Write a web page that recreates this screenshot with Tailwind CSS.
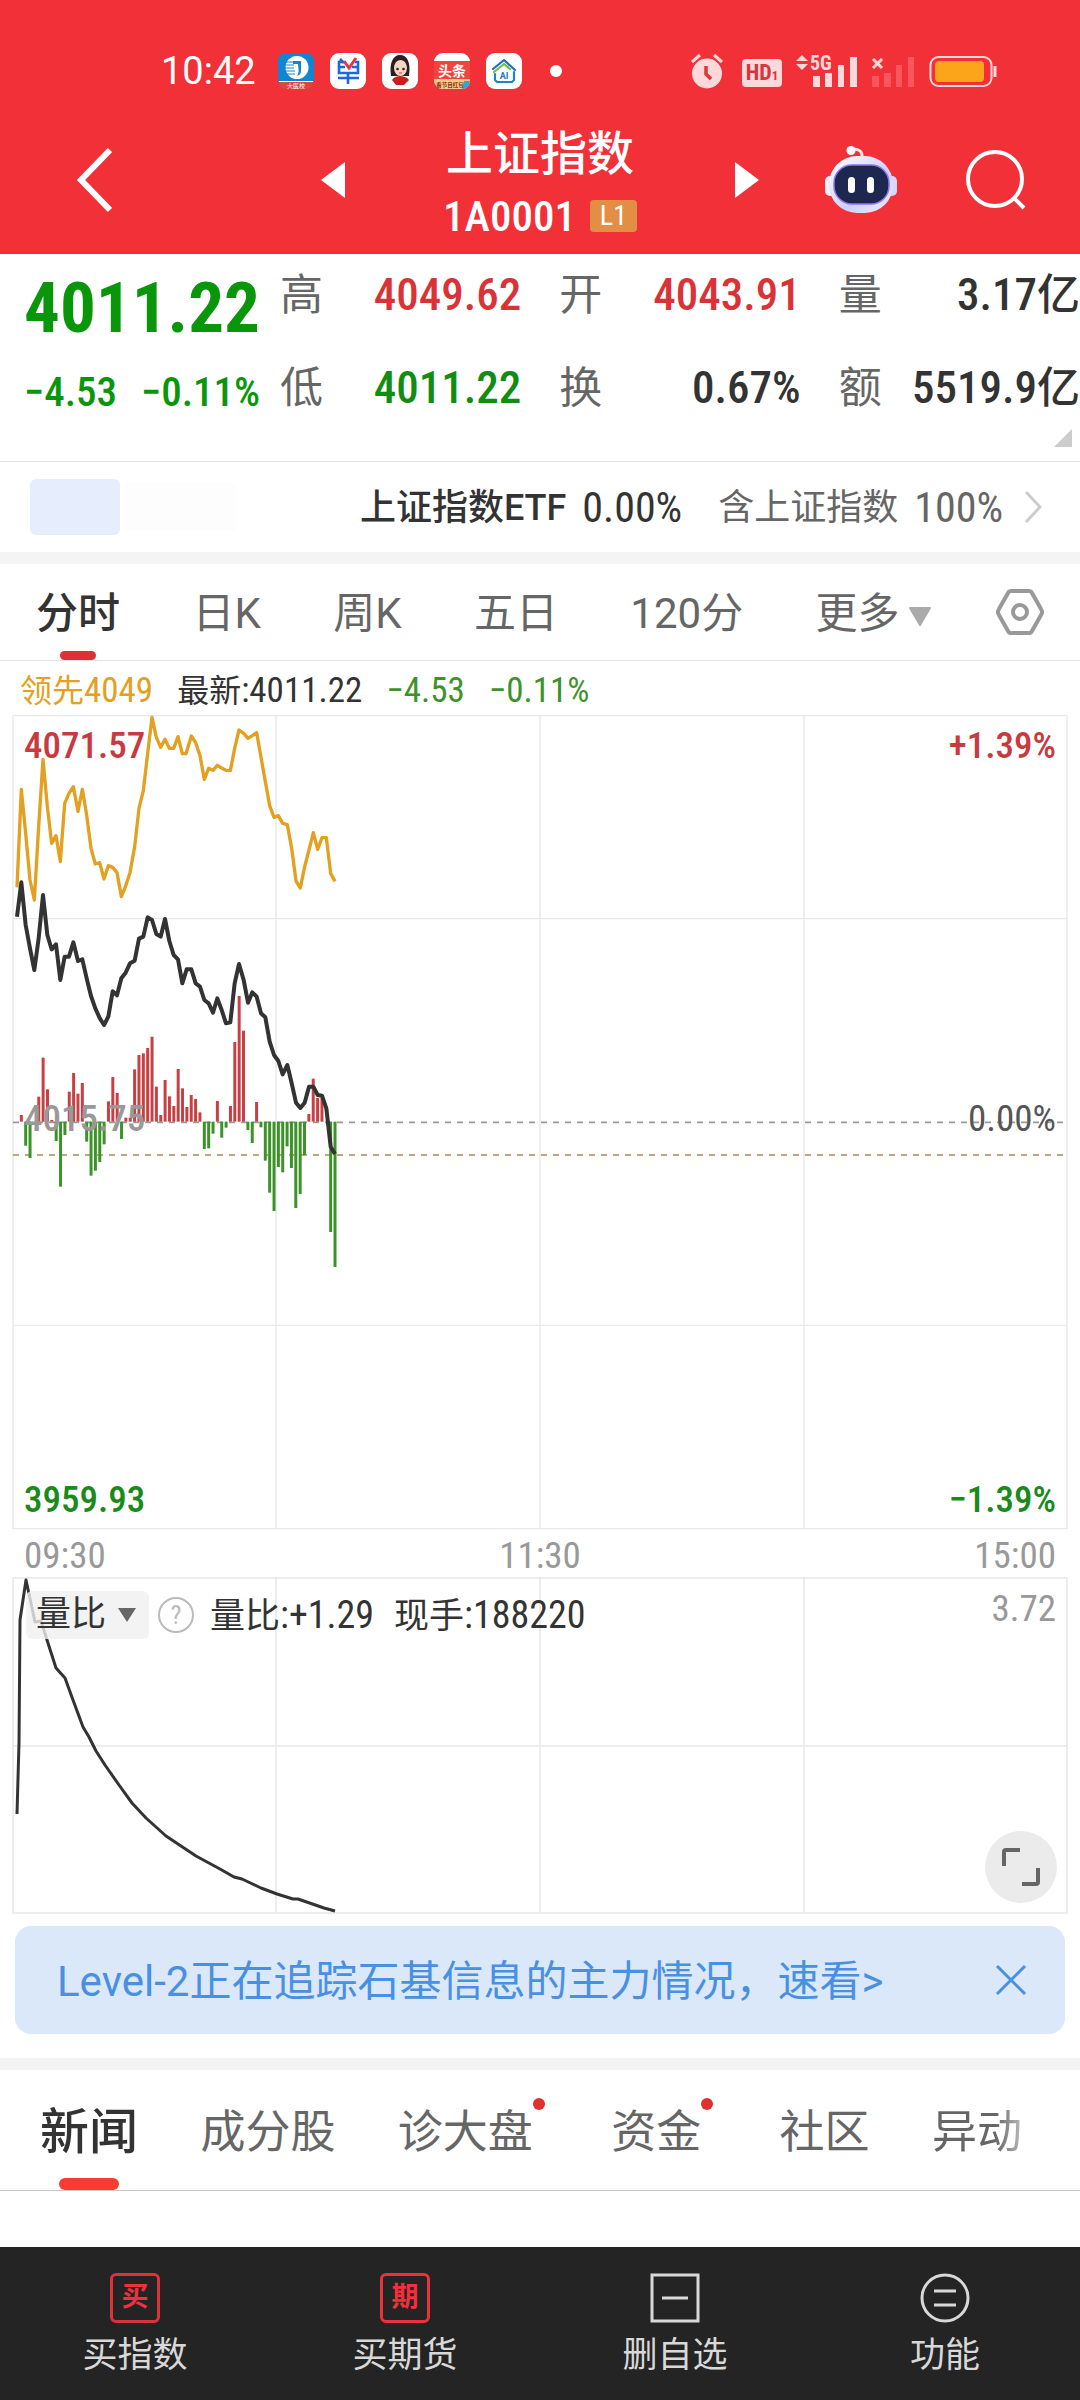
<!DOCTYPE html>
<html lang="zh-CN">
<head>
    <meta charset="UTF-8">
    <meta name="viewport" content="width=device-width, initial-scale=1.0">
    <title>上证指数 1A0001</title>
    <script src="https://cdn.jsdelivr.net/npm/@tailwindcss/browser@4"></script>
    <style>
        body {
            font-family: Roboto, 'Noto Sans CJK SC', sans-serif;
        }
        .num {
            font-family: 'Roboto Condensed', Roboto, 'Noto Sans CJK SC', sans-serif;
        }
    </style>
</head>
<body class="bg-white text-[#333] flex flex-col min-h-screen">
    <header class="bg-[#f23038] text-white">
        <!-- barra de estado -->
        <div class="h-[118px] pt-6 pl-[161px] pr-[83px] flex items-center justify-between">
            <div class="flex items-center gap-4">
                <span class="text-[38px] mr-1.5">10:42</span>
                <svg class="w-9 h-9" viewBox="0 0 36 36">
                    <rect width="36" height="36" rx="8" fill="#0f86cf"/>
                    <path d="M0 28h36a8 8 0 0 1-8 8H8a8 8 0 0 1-8-8z" fill="#e0453d"/>
                    <path d="M1 28.500h34" stroke="#fff" stroke-width="1"/>
                    <circle cx="19" cy="14.500" r="11.500" fill="#fff"/>
                    <path d="M15 8h8v10c0 2-1 4-4 5 3-5 1-8 1-12h-5z" fill="#0f86cf"/>
                    <path d="M7 9h9M6 12h10M6 15h10M6 18h11M8 21h9" stroke="#0f86cf" stroke-width="1"/>
                    <text x="18" y="34.500" font-size="6" fill="#fff" text-anchor="middle">大医校</text>
                </svg>
                <svg class="w-9 h-9" viewBox="0 0 36 36">
                    <rect width="36" height="36" rx="9" fill="#fff"/>
                    <g fill="none" stroke="#1769dc" stroke-width="2.600">
                        <path d="M13 9H9v11h19V9h-3M9 14h6M22 14h6M18 20v11M8 25h21M10 6l4 4"/>
                        <path d="M14 8l5 7 7-10" stroke="#ee2f49" stroke-width="3"/>
                    </g>
                </svg>
                <svg class="w-9 h-9" viewBox="0 0 36 36">
                    <rect width="36" height="36" rx="9" fill="#fff"/>
                    <path d="M9 23C7 10 11 2 18 2s11 7 9 21z" fill="#2b2021"/>
                    <ellipse cx="18.500" cy="15" rx="6.500" ry="8" fill="#f7d5c4"/>
                    <path d="M11 14c2-6 6-8 8-8 3 0 6 4 6 8 2-6-1-11-7-11s-9 5-7 11z" fill="#2b2021"/>
                    <circle cx="15.500" cy="16" r="1.300" fill="#222"/>
                    <circle cx="21.500" cy="16" r="1.300" fill="#222"/>
                    <path d="M17 20h3" stroke="#d33" stroke-width="1"/>
                    <path d="M10 27c2-3 5-4 8-4s7 1 9 4l-5 5h-8z" fill="#c4201d"/>
                </svg>
                <svg class="w-9 h-9" viewBox="0 0 36 36">
                    <rect width="36" height="36" rx="9" fill="#fff"/>
                    <path d="M0 8h36v19H0z" fill="#f0443f"/>
                    <path d="M0 26h36v2a8 8 0 0 1-8 8H9a9 9 0 0 1-9-8z" fill="#fbc98a"/>
                    <path d="M30 28h6a8 8 0 0 1-8 8z" fill="#29a9d8"/>
                    <text x="18" y="23" font-size="14" font-weight="700" fill="#fff" text-anchor="middle">头条</text>
                    <text x="16" y="33.500" font-size="5.500" font-weight="700" fill="#7a3413" text-anchor="middle">看节目红包</text>
                </svg>
                <svg class="w-9 h-9" viewBox="0 0 36 36">
                    <rect width="36" height="36" rx="9" fill="#fff"/>
                    <g fill="none" stroke-width="2.200" stroke-linecap="round" stroke-linejoin="round">
                        <path d="M7 16L18 7l11 10" stroke="#1f6cc4"/>
                        <path d="M8 19l10-8 6 5" stroke="#70bf44"/>
                        <path d="M9 21v6l2 2h15l2-2v-8" stroke="#1f86c4"/>
                    </g>
                    <text x="18" y="26" font-size="9" font-weight="700" fill="#1f78c4" text-anchor="middle">AI</text>
                </svg>
                <span class="w-3 h-3 ml-3 rounded-full bg-white"></span>
            </div>
            <div class="flex items-center gap-[14px]">
                <svg class="w-[34px] h-9" viewBox="0 0 34 36">
                    <circle cx="17" cy="20.500" r="15" fill="#fdd9db"/>
                    <path d="M2 9l8-7M32 9l-8-7" stroke="#fdd9db" stroke-width="3"/>
                    <path d="M16 13v8l5 5" fill="none" stroke="#e0353b" stroke-width="3.500"/>
                </svg>
                <span class="w-10 h-7 ml-1 mt-1 rounded bg-[#fdd9db] text-[#d8343b] text-[22px] leading-7 text-center font-bold num">HD<span class="text-[13px]">1</span></span>
                <svg class="w-[61px] h-9 overflow-visible" viewBox="0 0 61 36">
                    <g fill="#fdd9db">
                        <path d="M0 8l6-6 6 6zM0 11h12l-6 6z"/>
                        <path d="M17 23h7v11h-7zM29 20h7v14h-7zM42 12h6v22h-6zM54 4h7v30h-7z"/>
                        <text x="14" y="17" font-size="20" font-weight="700" class="num">5G</text>
                    </g>
                </svg>
                <svg class="w-[44px] h-9" viewBox="0 0 44 36">
                    <path d="M2 6l9 9M11 6l-9 9" stroke="#fdd9db" stroke-width="3"/>
                    <path d="M1 23h7v11H1zM13 20h7v14h-7zM25 12h6v22h-6zM37 4h6v30h-6z" fill="#f8565d"/>
                </svg>
                <svg class="w-[68px] h-9" viewBox="0 0 68 36">
                    <rect x="1.500" y="4" width="61" height="29" rx="8" fill="none" stroke="#fdd9db" stroke-width="2"/>
                    <rect x="6" y="8" width="49" height="21" rx="4" fill="#fca41a"/>
                    <path d="M66 13v11" stroke="#fdd9db" stroke-width="3"/>
                </svg>
            </div>
        </div>
        <!-- título -->
        <div class="h-[136px] pb-3 grid grid-cols-[255px_1fr_255px] items-center">
            <button type="button" aria-label="返回" class="pl-[76px]">
                <svg class="w-9 h-[66px]" viewBox="0 0 36 66"><path d="M34 3L5 33l29 30" fill="none" stroke="#fff" stroke-width="6"/></svg>
            </button>
            <div class="flex items-center justify-between px-[66px]">
                <button type="button" aria-label="上一个"><svg class="w-6 h-9" viewBox="0 0 24 36"><path d="M24 0v36L0 18z" fill="#fff"/></svg></button>
                <div class="flex flex-col items-center">
                    <h1 class="text-[47px] leading-[72px] font-medium">上证指数</h1>
                    <div class="flex items-center gap-3.5 h-[52px]">
                        <span class="num text-[43px] leading-[52px] font-medium">1A0001</span>
                        <span class="num w-[47px] h-8 rounded-sm bg-[#e28e45] text-[28px] leading-8 text-center">L1</span>
                    </div>
                </div>
                <button type="button" aria-label="下一个"><svg class="w-6 h-9" viewBox="0 0 24 36"><path d="M0 0v36l24-18z" fill="#fff"/></svg></button>
            </div>
            <div class="flex items-center gap-[68px]">
                <button type="button" aria-label="智能助手">
                    <svg class="w-[72px] h-[68px]" viewBox="0 0 72 68">
                        <defs>
                            <linearGradient id="casco" x1="0" y1="0" x2="1" y2="1"><stop offset="0" stop-color="#fff"/><stop offset=".6" stop-color="#ccd0fb"/><stop offset="1" stop-color="#f3efff"/></linearGradient>
                        </defs>
                        <path d="M26 4c7-2 12 1 11 8" fill="none" stroke="#fde5ea" stroke-width="3"/>
                        <circle cx="26" cy="4.500" r="4.500" fill="#fff"/>
                        <rect x="0" y="30" width="10" height="20" rx="5" fill="#f6eefc"/>
                        <rect x="62" y="30" width="10" height="20" rx="5" fill="#d6d8fb"/>
                        <rect x="4" y="10" width="64" height="57" rx="28" fill="url(#casco)"/>
                        <rect x="9" y="19" width="55" height="39" rx="18" fill="#1e2750" stroke="#8e74e8" stroke-width="1.500"/>
                        <rect x="23" y="31" width="7" height="16" rx="3.500" fill="#fff"/>
                        <rect x="42" y="31" width="7" height="16" rx="3.500" fill="#fff"/>
                    </svg>
                </button>
                <button type="button" aria-label="搜索">
                    <svg class="w-[62px] h-[62px]" viewBox="0 0 62 62" fill="none" stroke="#fff" stroke-width="4"><circle cx="30" cy="30" r="27"/><path d="M49 49l10 10"/></svg>
                </button>
            </div>
        </div>
    </header>

    <!-- cotización -->
    <section class="relative h-[208px] pt-px flex border-b border-[#e6e6e6]">
        <div class="w-[280px] shrink-0 pl-6 num text-[#0a960a]">
            <div class="h-[106px] leading-[106px] text-[71px] font-bold">4011.22</div>
            <div class="h-[62px] leading-[62px] text-[41px] font-medium flex gap-6"><span>−4.53</span><span>−0.11%</span></div>
        </div>
        <dl class="flex-1 grid grid-cols-3 gap-x-[38px] gap-y-[13px] content-start text-[45px] font-medium num">
            <div class="h-20 flex items-center justify-between"><dt class="text-[43px] font-normal text-[#666]">高</dt><dd class="text-[#d93338]">4049.62</dd></div>
            <div class="h-20 flex items-center justify-between"><dt class="text-[43px] font-normal text-[#666]">开</dt><dd class="text-[#d93338]">4043.91</dd></div>
            <div class="h-20 flex items-center justify-between"><dt class="text-[43px] font-normal text-[#666]">量</dt><dd>3.17<span class="text-[43px]">亿</span></dd></div>
            <div class="h-20 flex items-center justify-between"><dt class="text-[43px] font-normal text-[#666]">低</dt><dd class="text-[#138c13]">4011.22</dd></div>
            <div class="h-20 flex items-center justify-between"><dt class="text-[43px] font-normal text-[#666]">换</dt><dd>0.67%</dd></div>
            <div class="h-20 flex items-center justify-between"><dt class="text-[43px] font-normal text-[#666]">额</dt><dd>5519.9<span class="text-[43px]">亿</span></dd></div>
        </dl>
        <svg class="absolute right-2 bottom-[14px] w-[18px] h-[18px]" viewBox="0 0 18 18"><path d="M18 0v18H0z" fill="#ccc"/></svg>
    </section>

    <a href="#etf" class="h-[90px] pl-[30px] pr-[37px] flex items-center text-[36px]">
        <span class="w-[90px] h-14 rounded-md bg-[#e6edfc]"></span>
        <span class="w-28 h-12 ml-1 bg-[#fdfdfe]"></span>
        <span class="ml-auto pt-0.5 font-medium">上证指数ETF</span>
        <span class="num text-[42px] ml-4">0.00%</span>
        <span class="ml-9 pt-0.5 text-[#666]">含上证指数</span>
        <span class="num text-[42px] ml-4 text-[#666]">100%</span>
        <svg class="w-5 h-9 ml-5" viewBox="0 0 20 36"><path d="M3 3l14 15L3 33" fill="none" stroke="#ccc" stroke-width="3"/></svg>
    </a>
    <div class="h-3 bg-[#f4f4f4]"></div>

    <!-- periodos -->
    <nav class="h-[97px] px-9 flex items-center justify-between text-[42px] leading-[100px] text-[#666] border-b border-[#e2e2e2]">
        <button type="button" class="relative h-24 text-[#333] font-medium">分时<span class="absolute bottom-0 left-1/2 -translate-x-1/2 w-9 h-[9px] rounded-full bg-[#dc3236]"></span></button>
        <button type="button" class="h-24">日K</button>
        <button type="button" class="h-24">周K</button>
        <button type="button" class="h-24">五日</button>
        <button type="button" class="h-24">120分</button>
        <button type="button" class="h-24">更多<svg class="inline-block ml-2 w-6 h-5" viewBox="0 0 24 20"><path d="M2 1h20L12 18z" fill="#aaa" stroke="#aaa" stroke-width="2" stroke-linejoin="round"/></svg></button>
        <button type="button" aria-label="设置" class="-ml-2">
            <svg class="w-12 h-[46px]" viewBox="0 0 48 46" fill="none" stroke="#999" stroke-width="4"><path d="M15 2h18q2 0 3 2l9 16q2 3 0 6l-9 16q-1 2-3 2H15q-2 0-3-2L3 26q-2-3 0-6l9-16q1-2 3-2z"/><circle cx="24" cy="23" r="7"/></svg>
        </button>
    </nav>

    <!-- gráfico -->
    <div class="h-[54px] pt-1.5 pl-5 flex items-center gap-6 num text-[35px]">
        <span class="text-[#e3a021]"><span class="text-[32px]">领先</span>4049</span>
        <span><span class="text-[32px]">最新</span>:4011.22</span>
        <span class="text-[#3c9429]">−4.53</span>
        <span class="text-[#3c9429]">−0.11%</span>
    </div>
    <div class="relative num text-[37px] leading-10">
        <svg class="w-full" viewBox="0 45 3240 2445" fill="none">
            <g stroke="#e8e8e8" stroke-width="4">
                <path d="M39 47h3162v2439H39z"/>
                <path d="M39 656h3162M39 1876h3162M828 47v2439M1620 47v2439M2412 47v2439"/>
            </g>
            <path d="M39 1267h3162" stroke="#999" stroke-width="5" stroke-dasharray="18 18"/>
            <path d="M39 1365h3162" stroke="#ab8c50" stroke-width="5" stroke-dasharray="18 18"/>
            <g id="barras" stroke-width="9"></g>
            <polyline id="linea-media" stroke="#e3a021" stroke-width="10" stroke-linejoin="round" points="51,562 64,268 77,400 90,540 103,600 116,380 129,178 142,320 155,430 168,407 181,485 194,310 207,280 220,260 234,334 247,268 260,345 273,445 286,492 299,488 312,537 325,497 338,502 351,518 364,590 377,558 390,518 404,440 417,325 430,272 443,160 456,52 469,112 482,142 495,118 508,145 521,145 534,110 547,161 558,161 574,108 587,128 600,167 613,238 626,205 639,211 652,196 665,204 678,211 691,212 704,145 717,90 731,100 744,115 757,107 770,98 783,172 796,245 809,317 822,352 835,347 848,370 862,374 875,445 888,543 901,564 914,500 927,450 940,398 953,448 966,413 979,413 992,520 1005,544"/>
            <polyline id="linea-precio" stroke="#333" stroke-width="12" stroke-linejoin="round" points="51,650 64,547 77,675 90,745 103,810 116,715 129,585 142,705 155,748 168,733 181,840 194,770 207,770 220,727 234,783 247,778 260,835 273,888 286,925 299,954 312,975 325,950 338,874 351,886 364,835 377,818 390,790 404,782 417,716 430,710 443,652 456,660 469,702 482,710 495,657 508,723 521,765 534,778 547,850 560,808 574,808 587,850 600,860 613,900 626,910 639,938 652,895 665,930 678,970 691,967 704,850 717,792 731,840 744,908 757,877 770,890 783,940 796,952 809,1025 822,1065 835,1083 848,1123 862,1095 875,1150 888,1208 901,1224 914,1208 927,1160 940,1160 953,1185 966,1187 979,1225 992,1340 1005,1362"/>
        </svg>
        <span class="absolute left-6 top-[11px] text-[#c93a40] font-medium">4071.57</span>
        <span class="absolute right-6 top-[11px] text-[#c93a40] font-medium">+1.39%</span>
        <span class="absolute left-6 top-[384px] text-[#999] font-medium">4015.75</span>
        <span class="absolute right-6 top-[384px] text-[#555]">0.00%</span>
        <span class="absolute left-6 bottom-[10px] text-[#1a8a1a] font-medium">3959.93</span>
        <span class="absolute right-6 bottom-[10px] text-[#1a8a1a] font-medium">−1.39%</span>
    </div>
    <div class="h-[47px] pt-1 px-6 flex items-center justify-between num text-[37px] text-[#999]">
        <span>09:30</span><span>11:30</span><span>15:00</span>
    </div>
    <div class="relative num">
        <svg class="w-full" viewBox="0 0 1080 338" fill="none">
            <g stroke="#e8e8e8" stroke-width="1.500">
                <path d="M13 1h1054v335H13z"/>
                <path d="M13 169h1054M276 1v335M540 1v335M804 1v335"/>
            </g>
            <polyline stroke="#333" stroke-width="3" stroke-linejoin="round" points="17,237 19,166 20,43 26,3 35,45 41,44 47,63 56,91 65,101 73,123 83,150 89,160 96,174 105,188 119,208 132,226 146,241 166,259 196,279 220,292 234,300 242,302 261,311 277,317 293,322 298,322 324,331 335,334"/>
        </svg>
        <div class="absolute left-[26px] top-[14px] h-12 flex items-center text-[38px]">
            <button type="button" class="h-12 w-[123px] pl-[10px] flex items-center gap-3 rounded-md bg-[#f0f0f0]/80 text-[35px]">量比<svg class="w-[18px] h-[14px]" viewBox="0 0 18 14"><path d="M0 0h18L9 14z" fill="#666"/></svg></button>
            <button type="button" aria-label="说明" class="ml-[9px] w-9 h-9 rounded-full border-2 border-[#bbb] text-[#bbb] text-[26px] leading-8 text-center">?</button>
            <span class="ml-4"><span class="text-[35px]">量比</span>:+1.29</span>
            <span class="ml-5"><span class="text-[35px]">现手</span>:188220</span>
        </div>
        <span class="absolute right-6 top-3 text-[37px] leading-10 text-[#999]">3.72</span>
        <button type="button" aria-label="全屏" class="absolute right-[23px] bottom-[12px] w-[72px] h-[72px] rounded-full bg-[#ebebeb] flex items-center justify-center">
            <svg class="w-[38px] h-[38px]" viewBox="0 0 38 38" fill="none" stroke="#666" stroke-width="4"><path d="M2 18V4q0-2 2-2h14M36 20v14q0 2-2 2H20"/></svg>
        </button>
    </div>

    <div class="mx-[15px] mt-[11px] h-[108px] pl-[42px] pr-[38px] rounded-2xl bg-[#dae8fa] text-[#4a90e2] flex items-center justify-between text-[42px]">
        <a href="#level2" class="pt-0.5">Level-2正在追踪石基信息的主力情况，速看&gt;</a>
        <button type="button" aria-label="关闭"><svg class="w-8 h-8" viewBox="0 0 32 32"><path d="M2 2l28 28M30 2L2 30" stroke="#4a90e2" stroke-width="3"/></svg></button>
    </div>
    <div class="mt-6 h-3 bg-[#f4f4f4]"></div>

    <nav class="h-[121px] pl-10 pr-[58px] flex items-center justify-between text-[45px] leading-[126px] text-[#666] border-b border-[#c8c8c8]">
        <a href="#noticias" class="relative h-[120px] text-[49px] font-medium text-[#333]">新闻<span class="absolute bottom-0 left-1/2 -translate-x-1/2 w-[60px] h-3 rounded-full bg-[#f93c33]"></span></a>
        <a href="#componentes" class="h-[120px]">成分股</a>
        <a href="#diagnostico" class="relative h-[120px] pr-4">诊大盘<span class="absolute right-1 top-7 w-3 h-3 rounded-full bg-[#e0302f]"></span></a>
        <a href="#fondos" class="relative h-[120px] pr-4">资金<span class="absolute right-1 top-7 w-3 h-3 rounded-full bg-[#e0302f]"></span></a>
        <a href="#comunidad" class="h-[120px]">社区</a>
        <a href="#movimientos" class="h-[120px] bg-linear-to-r from-[#666] from-70% to-[#bbb] bg-clip-text text-transparent">异动</a>
    </nav>

    <footer class="mt-auto h-[153px] bg-[#242424] text-[#d8d8d8] text-[35px] leading-[44px] grid grid-cols-4 pt-[26px]">
        <button type="button" class="flex flex-col items-center gap-[11px] self-start">
            <span class="w-[50px] h-[50px] rounded-md border-3 border-[#d9343a] text-[#f0303a] text-[27px] leading-[42px] font-bold">买</span>买指数
        </button>
        <button type="button" class="flex flex-col items-center gap-[11px] self-start">
            <span class="w-[50px] h-[50px] rounded-md border-3 border-[#e8333a] text-[#f0303a] text-[27px] leading-[42px] font-bold">期</span>买期货
        </button>
        <button type="button" class="flex flex-col items-center gap-[11px] self-start">
            <svg class="w-[50px] h-[50px]" viewBox="0 0 50 50" fill="none" stroke="#d8d8d8" stroke-width="3"><path d="M2 2h46v46H2zM12 25h26"/></svg>删自选
        </button>
        <button type="button" class="flex flex-col items-center gap-[11px] self-start">
            <svg class="w-[50px] h-[50px]" viewBox="0 0 50 50" fill="none" stroke="#d8d8d8" stroke-width="3"><circle cx="25" cy="25" r="23"/><path d="M14 18h22M14 32h22"/></svg>功能
        </button>
    </footer>

    <script>
        // fuerza por minuto: positivo arriba (rojo), negativo abajo (verde)
        const fuerza = [
            20, -72, -109, 0, 75, 192, 97, 5, -58, -195, -40, 90, 146, 84, 116, -60, -162, -147, -121, -68,
            61, 134, 86, -52, 12, 12, 157, 200, 205, 221, 255, 105, 20, 125, 76, 47, 158, 100, 44, 80,
            68, 28, -82, -80, -36, 62, -48, -18, 47, 239, 377, 273, -25, -64, 59, -17, -117, -213, -268, -136,
            -152, -74, -139, -259, -217, -100, 23, 129, 71, 72, 0, -331, -436
        ];
        const base = 1265;
        document.getElementById("barras").innerHTML = fuerza.map((v, i) => {
            const x = 64 + i * 13.07;
            return `<path d="M${x} ${base}V${base - v}" stroke="${v > 0 ? "#c94044" : "#3c9429"}"/>`;
        }).join("");
    </script>
</body>
</html>
